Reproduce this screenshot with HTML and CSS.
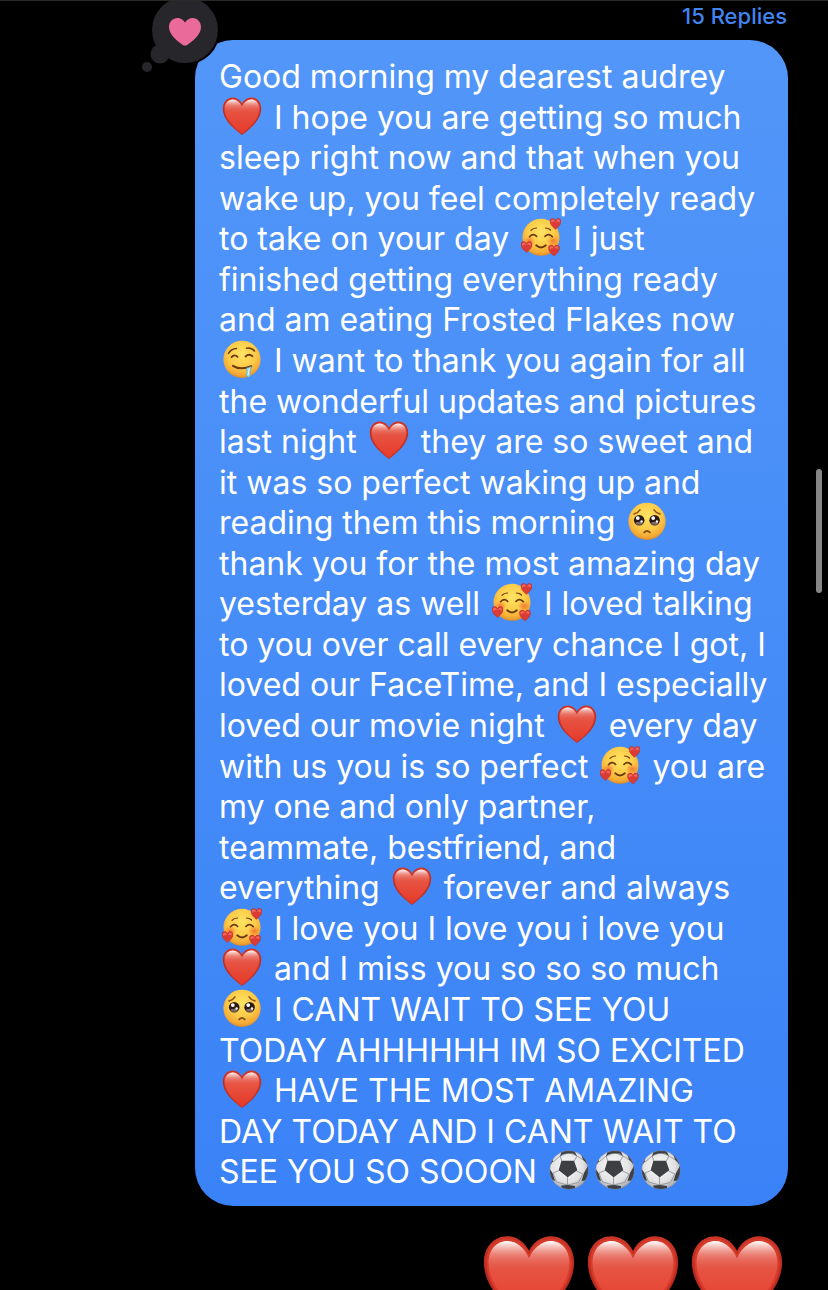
FILE: index.html
```html
<!DOCTYPE html>
<html lang="en">
<head>
<meta charset="utf-8">
<meta name="viewport" content="width=device-width, initial-scale=1">
<title>Messages</title>
<link rel="stylesheet" href="styles.css">
</head>
<body>
<svg class="sprites" aria-hidden="true">
  <defs>
    <linearGradient id="heart-fill" x1="0" y1="0" x2="0" y2="1">
      <stop offset="0" stop-color="#e2604f"/><stop offset=".45" stop-color="#e74f3e"/><stop offset="1" stop-color="#e63a2a"/>
    </linearGradient>
    <linearGradient id="heart-rim" x1="0" y1="0" x2="0" y2="1">
      <stop offset="0" stop-color="#cb3526"/><stop offset=".45" stop-color="#b92a1d"/><stop offset="1" stop-color="#c42e20"/>
    </linearGradient>
    <linearGradient id="heart-shine" x1="0" y1="0" x2="0" y2="1">
      <stop offset="0" stop-color="#fff"/><stop offset=".12" stop-color="#fbe0dd" stop-opacity=".85"/><stop offset=".35" stop-color="#f0a198" stop-opacity=".55"/><stop offset=".8" stop-color="#e8513f" stop-opacity="0"/>
    </linearGradient>
    <radialGradient id="face-fill" cx=".5" cy=".36" r=".66">
      <stop offset="0" stop-color="#ffe463"/><stop offset=".55" stop-color="#fccb48"/><stop offset=".85" stop-color="#f3a834"/><stop offset="1" stop-color="#d98322"/>
    </radialGradient>
    <radialGradient id="blush">
      <stop offset="0" stop-color="#f4602e" stop-opacity=".75"/><stop offset="1" stop-color="#f4602e" stop-opacity="0"/>
    </radialGradient>
    <radialGradient id="ball-fill" cx=".45" cy=".4" r=".6">
      <stop offset="0" stop-color="#fafafa"/><stop offset=".7" stop-color="#e2e2e4"/><stop offset="1" stop-color="#a9abb0"/>
    </radialGradient>
    <clipPath id="ball-clip"><circle cx="20" cy="20" r="19.3"/></clipPath>
  </defs>
  <symbol id="heart" viewBox="0 0 40 40">
    <path fill="url(#heart-rim)" d="M20 7.600C22 3.600 25.600 1.400 29.200 1.400C35 1.400 39.200 6 39.200 12.600C39.200 23.400 29.500 32 20 39C10.500 32 .8 23.400 .8 12.600C.8 6 5 1.400 10.800 1.400C14.400 1.400 18 3.600 20 7.600Z"/>
    <path fill="#d63b2b" d="M20 9.200C21.900 4.800 25.600 2.400 29.200 2.400C34.400 2.400 38.200 6.600 38.200 12.600C38.200 22.800 29 31.400 20 38.200C11 31.400 1.800 22.800 1.800 12.600C1.800 6.600 5.600 2.400 10.800 2.400C14.400 2.400 18.100 4.800 20 9.200Z"/>
    <path fill="url(#heart-fill)" d="M20 10.800C22 6.200 25.600 3.400 29.200 3.400C33.800 3.400 37.200 7.200 37.200 12.600C37.200 22.200 28.500 30.600 20 37.200C11.500 30.600 2.800 22.200 2.800 12.600C2.800 7.200 6.200 3.400 10.800 3.400C14.400 3.400 18 6.200 20 10.800Z"/>
    <path fill="url(#heart-shine)" d="M20 10.800C22 6.200 25.600 3.400 29.200 3.400C33.800 3.400 37.200 7.200 37.200 12.600C37.200 15.500 36.500 18 35.300 20H4.700C3.500 18 2.800 15.500 2.800 12.600C2.800 7.200 6.200 3.400 10.800 3.400C14.400 3.400 18 6.200 20 10.800Z"/>
  </symbol>
  <symbol id="mini-heart" viewBox="0 0 12 12">
    <path fill="#dc3a34" stroke="#bd2a25" stroke-width=".5" d="M6 3C6.600 1.200 7.700 .6 8.900 .6C10.600 .6 11.600 2 11.500 3.800C11.300 7 8.600 9.400 6 11.600C3.400 9.400 .7 7 .5 3.800C.4 2 1.400 .6 3.100 .6C4.300 .6 5.400 1.200 6 3Z"/>
    <path fill="#ee6a60" d="M1.500 3.400C1.800 1.400 4.600 .9 5.700 3.900C4.500 3.600 2.900 3.900 2 5ZM6.500 3.900C7.500 .9 10.200 1.400 10.500 3.400L10 4.600C9 3.600 7.500 3.500 6.500 3.900Z"/>
  </symbol>
  <symbol id="adoring" viewBox="0 0 40 40">
    <circle cx="20" cy="20.300" r="18.500" fill="url(#face-fill)"/>
    <ellipse cx="8.500" cy="24" rx="6" ry="5" fill="url(#blush)"/><ellipse cx="32" cy="24" rx="6" ry="5" fill="url(#blush)"/>
    <g fill="none" stroke="#6b3a0e" stroke-linecap="round">
      <path stroke-width="1.200" d="M10 13.300Q12 10.900 15.500 11M24.500 11Q27.500 11 29.500 13"/>
      <path stroke-width="1.700" d="M8.500 19.700Q12 15.800 15.600 19.300M24 19.300Q27.700 15.800 31.300 19.700"/>
      <path stroke-width="1.900" d="M15.200 28.300Q20 32.600 24.800 28.300"/>
    </g>
    <use href="#mini-heart" x="28.500" y=".8" width="12" height="12"/>
    <use href="#mini-heart" x="-.5" y="24" width="12" height="12"/>
    <use href="#mini-heart" x="27" y="27.500" width="12" height="12"/>
  </symbol>
  <symbol id="drooling" viewBox="0 0 40 40">
    <circle cx="20" cy="20.300" r="18.600" fill="url(#face-fill)"/>
    <g fill="none" stroke="#6b3a0e" stroke-linecap="round">
      <path stroke-width="1.500" d="M6.500 14.500Q9 9.700 14.500 9.500M24.500 9.200Q29.500 8.600 32.500 12"/>
      <path stroke-width="1.800" d="M9.500 18.200Q12.500 14.800 15.600 17.800M23.500 17.500Q27 14.200 30.500 17.200"/>
      <path stroke-width="2" d="M11 26.800Q18.500 31.600 29.200 27.300"/>
    </g>
    <path fill="#91d8ed" stroke="#559fc0" stroke-width=".5" d="M24.500 29.200L29.200 27.500L28.300 32.500Q28 34.500 28.400 37.200Q26 39 24 36.500Q25.500 34 24.500 29.200Z"/>
    <path stroke="#effcff" fill="none" d="M27.200 29.500L26.200 36"/>
  </symbol>
  <symbol id="pleading" viewBox="0 0 40 40">
    <circle cx="20" cy="20.300" r="18.600" fill="url(#face-fill)"/>
    <circle cx="12.200" cy="19.200" r="5.300" fill="#2b1b18"/><circle cx="27.600" cy="19.200" r="5.300" fill="#2b1b18"/>
    <ellipse cx="12" cy="22.300" rx="3.500" ry="1.500" fill="#806b68"/><ellipse cx="27.700" cy="22.300" rx="3.500" ry="1.500" fill="#806b68"/>
    <g fill="#fff"><circle cx="10.800" cy="17.100" r="1.900"/><circle cx="14.600" cy="20.500" r="1.200"/><circle cx="26.200" cy="17.100" r="1.900"/><circle cx="30" cy="20.500" r="1.200"/></g>
    <g fill="none" stroke="#87501a" stroke-linecap="round">
      <path stroke-width="1.500" d="M7 13Q11 12 13 8.800M27 8.800Q29 12 33 13"/>
      <path stroke-width="2" d="M17.200 31.400Q20 28.600 22.800 31.400"/>
    </g>
  </symbol>
  <symbol id="ball" viewBox="0 0 40 40">
    <circle cx="20" cy="20" r="19.300" fill="url(#ball-fill)"/>
    <g clip-path="url(#ball-clip)">
      <path fill="none" stroke="#93959a" stroke-width=".9" d="M13 11.500L11 6M25 11.500L28 6M10 20.500L4 23M27.500 21L34 24M18.500 26.500V35M11 6L4 12M28 6L36 11M4 23L7.500 32L18.500 35L29.500 32.500L34 24M11 6L20 2.500L28 6"/>
      <path fill="#3d3f42" stroke="#3d3f42" stroke-width="1.500" stroke-linejoin="round" d="M13 11.500H24.500L27.500 20L18.700 26.300L10.500 20Z"/>
      <path fill="#3d3f42" d="M11 6.500L13.500 4.500L17 3.500L24 3.500L28 6L25 0H13ZM0 16.500L4 11.500L3.500 6L0 7ZM0 18L3.500 23L6 31L0 29ZM39.500 15L35 23L32.500 31L40 30ZM34 9.500L38 14L40 13L38 7L32 4ZM12 35.500L19 35L26 36L26 40H14Z"/>
    </g>
    <circle cx="20" cy="20" r="19" fill="none" stroke="#77797e" stroke-opacity=".5" stroke-width=".7"/>
  </symbol>
</svg>

<main class="thread">
  <a class="replies" href="#replies">15 Replies</a>

  <article class="bubble" id="replies">
    <p class="message">
      <span class="line">Good morning my dearest audrey</span>
      <span class="line"><svg class="emoji" role="img" aria-label="red heart"><use href="#heart"/></svg> I hope you are getting so much</span>
      <span class="line">sleep right now and that when you</span>
      <span class="line">wake up, you feel completely ready</span>
      <span class="line">to take on your day <svg class="emoji" role="img" aria-label="smiling face with hearts"><use href="#adoring"/></svg> I just</span>
      <span class="line">finished getting everything ready</span>
      <span class="line">and am eating Frosted Flakes now</span>
      <span class="line"><svg class="emoji" role="img" aria-label="drooling face"><use href="#drooling"/></svg> I want to thank you again for all</span>
      <span class="line">the wonderful updates and pictures</span>
      <span class="line">last night <svg class="emoji" role="img" aria-label="red heart"><use href="#heart"/></svg> they are so sweet and</span>
      <span class="line">it was so perfect waking up and</span>
      <span class="line">reading them this morning <svg class="emoji" role="img" aria-label="pleading face"><use href="#pleading"/></svg></span>
      <span class="line">thank you for the most amazing day</span>
      <span class="line">yesterday as well <svg class="emoji" role="img" aria-label="smiling face with hearts"><use href="#adoring"/></svg> I loved talking</span>
      <span class="line">to you over call every chance I got, I</span>
      <span class="line">loved our FaceTime, and I especially</span>
      <span class="line">loved our movie night <svg class="emoji" role="img" aria-label="red heart"><use href="#heart"/></svg> every day</span>
      <span class="line">with us you is so perfect <svg class="emoji" role="img" aria-label="smiling face with hearts"><use href="#adoring"/></svg> you are</span>
      <span class="line">my one and only partner,</span>
      <span class="line">teammate, bestfriend, and</span>
      <span class="line">everything <svg class="emoji" role="img" aria-label="red heart"><use href="#heart"/></svg> forever and always</span>
      <span class="line"><svg class="emoji" role="img" aria-label="smiling face with hearts"><use href="#adoring"/></svg> I love you I love you i love you</span>
      <span class="line"><svg class="emoji" role="img" aria-label="red heart"><use href="#heart"/></svg> and I miss you so so so much</span>
      <span class="line"><svg class="emoji" role="img" aria-label="pleading face"><use href="#pleading"/></svg> I CANT WAIT TO SEE YOU</span>
      <span class="line">TODAY AHHHHHH IM SO EXCITED</span>
      <span class="line"><svg class="emoji" role="img" aria-label="red heart"><use href="#heart"/></svg> HAVE THE MOST AMAZING</span>
      <span class="line">DAY TODAY AND I CANT WAIT TO</span>
      <span class="line">SEE YOU SO SOOON <svg class="emoji" role="img" aria-label="soccer ball"><use href="#ball"/></svg><svg class="emoji" role="img" aria-label="soccer ball"><use href="#ball"/></svg><svg class="emoji" role="img" aria-label="soccer ball"><use href="#ball"/></svg></span>
    </p>
    <svg class="tapback" viewBox="0 0 80 80" role="img" aria-label="Loved">
      <circle cx="45" cy="34" r="35" fill="#000"/>
      <g fill="#27262b"><circle cx="45" cy="34" r="33"/><circle cx="20" cy="58" r="9.500"/><circle cx="7" cy="71" r="5"/></g>
      <path fill="#ea6a99" d="M45 26.500C47 23.500 49.500 22 52.500 22C57.500 22 61 26 61 31C61 38.500 53.500 44.500 47.500 48.700Q45 50.500 42.500 48.700C36.500 44.500 29 38.500 29 31C29 26 32.500 22 37.500 22C40.500 22 43 23.500 45 26.500Z"/>
    </svg>
  </article>

  <div class="hearts">
    <svg class="big-heart" role="img" aria-label="red heart"><use href="#heart"/></svg>
    <svg class="big-heart" role="img" aria-label="red heart"><use href="#heart"/></svg>
    <svg class="big-heart" role="img" aria-label="red heart"><use href="#heart"/></svg>
  </div>
</main>
<div class="scroll-thumb"></div>
</body>
</html>
```

FILE: styles.css
```css
* { box-sizing: border-box; }

body {
  margin: 0;
  background: #000;
  color: #fff;
  font-family: Inter, "Liberation Sans", sans-serif;
}

.sprites {
  position: absolute;
  width: 0;
  height: 0;
}

.thread {
  display: flex;
  flex-direction: column;
  align-items: flex-end;
  height: 100vh;
  padding-right: 40px;
  border-top: 1px solid #292b2a;
  overflow: hidden;
}

.replies {
  flex: none;
  height: 39px;
  padding-right: 1px;
  color: #4285f0;
  font-size: 22px;
  font-weight: 500;
  line-height: 31px;
  text-decoration: none;
}

.bubble {
  position: relative;
  flex: none;
  align-self: stretch;
  margin-left: 195px;
  padding: 17px 0 13px 24px;
  border-radius: 38px;
  background: linear-gradient(#5296f9, #478df8 50%, #3a82f7);
}

.message {
  margin: 0;
  font-size: 32px;
  line-height: 1.268;
}

.line {
  display: block;
  white-space: nowrap;
}

.emoji {
  width: 40px;
  height: 40px;
  margin: -4px 3px -7px;
}

.tapback {
  position: absolute;
  top: -44px;
  left: -55px;
  width: 80px;
  height: 80px;
}

.hearts {
  display: flex;
  flex: none;
  gap: 10px;
  padding: 27px 4px 0 0;
}

.big-heart {
  width: 94px;
  height: 94px;
}

.scroll-thumb {
  position: fixed;
  top: 469px;
  right: 6px;
  width: 6px;
  height: 124px;
  border-radius: 3px;
  background: #868686;
}
```
